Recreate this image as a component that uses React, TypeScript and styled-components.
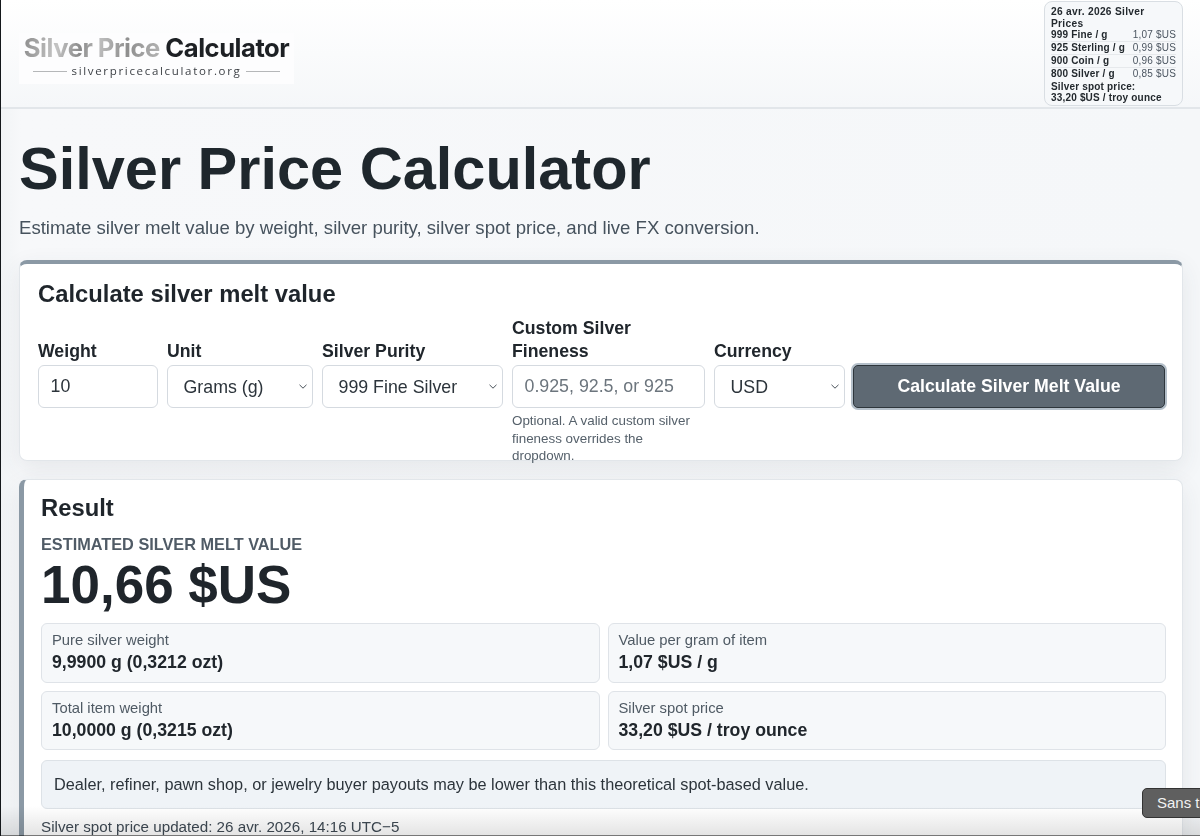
import React from "react";
import styled, { createGlobalStyle } from "styled-components";

const Global = createGlobalStyle`
  html, body { margin: 0; padding: 0; height: 836px; overflow: hidden; }
  body { font-family: "Liberation Sans", Arial, sans-serif; color: #1f252b; background: #f5f7f9; }
  * { box-sizing: border-box; }
`;

const Page = styled.div`
  position: relative;
  height: 836px;
  overflow: hidden;
  border-left: 1px solid #14181b;
  background: linear-gradient(90deg, #f1f4f6 0, #f7f8fa 20px, #f5f7f9 100%);
`;

const Header = styled.header`
  height: 109px;
  display: flex;
  justify-content: space-between;
  align-items: flex-start;
  padding: 1px 17px 0 18px;
  background: linear-gradient(180deg, #ffffff 0, #f5f7f9 100%);
  border-bottom: 2px solid #e2e6ea;
`;

const Logo = styled.div`
  margin-top: 32px;
  width: 275px;
  height: 51px;
  background: #fdfdfe;
  display: flex;
  flex-direction: column;
  align-items: center;
`;

const LogoTitle = styled.div`
  font-family: "Inter", "Open Sans", sans-serif;
  font-weight: 700;
  font-size: 25.6px;
  line-height: 30px;
  letter-spacing: -0.5px;
  color: #1d2024;
  white-space: nowrap;
`;

const LogoSilver = styled.span`
  background: linear-gradient(100deg, #8d8d8d 0, #c4c4c4 25%, #8a8a8a 42%, #bdbdbd 55%, #8e8e8e 75%, #b5b5b5 100%);
  -webkit-background-clip: text;
  background-clip: text;
  color: transparent;
`;

const LogoUrl = styled.div`
  display: flex;
  align-items: center;
  gap: 4px;
  font-family: "Open Sans", sans-serif;
  font-size: 11.5px;
  line-height: 14px;
  letter-spacing: 1.68px;
  color: #3b3f44;
  margin-top: 1px;
  &::before, &::after {
    content: "";
    width: 34px;
    height: 1px;
    background: #b5b7b9;
  }
`;

const PriceBox = styled.aside`
  width: 139px;
  height: 105px;
  border: 1px solid #d9dee3;
  border-radius: 8px;
  background: #f6f8fa;
  padding: 4px 6px 0 6px;
  font-size: 10px;
  line-height: 11.5px;
  font-weight: 700;
  color: #23292e;
  letter-spacing: 0.18px;
`;

const PriceTitle = styled.div`
  font-size: 10.2px;
  letter-spacing: 0.3px;
  width: 110px;
  margin-bottom: 0;
`;

const PriceRow = styled.div`
  display: flex;
  justify-content: space-between;
  height: 13px;
  line-height: 12.5px;
  border-bottom: 1px solid #e6e9ec;
  white-space: nowrap;
  &:nth-of-type(5) { border-bottom: none; }
`;

const PriceValue = styled.span`
  font-weight: 400;
  color: #4b5560;
`;

const PriceSpot = styled.div`
  margin-top: 0;
  line-height: 11px;
`;

const Main = styled.main`
  padding: 0 17px 0 18px;
`;

const H1 = styled.h1`
  margin: 27px 0 0;
  font-size: 59.5px;
  line-height: 66px;
  font-weight: 700;
  color: #1f272d;
  white-space: nowrap;
`;

const Sub = styled.p`
  margin: 14px 0 0;
  font-size: 18.6px;
  line-height: 24px;
  color: #46525d;
`;

const CalcCard = styled.section`
  margin-top: 20px;
  height: 201px;
  background: #fff;
  border: 1px solid #e2e6ea;
  border-top: 4px solid #8b99a5;
  border-radius: 8px;
  padding: 15px 18px 0 18px;
  box-shadow: 0 8px 24px rgba(60, 70, 80, 0.09);
`;

const CardTitle = styled.h2`
  margin: 0;
  font-size: 23.8px;
  line-height: 30px;
  font-weight: 700;
  color: #1f252b;
`;

const Fields = styled.div`
  margin-top: 17px;
  display: grid;
  grid-template-columns: 120px 146px 181px 193px 131px 312px;
  column-gap: 9px;
  align-items: end;
  grid-template-rows: 43px;
  height: 82px;
  align-content: end;
`;

const Field = styled.div`
  display: flex;
  flex-direction: column;
  position: relative;
`;

const Label = styled.label`
  font-size: 17.7px;
  line-height: 22.5px;
  font-weight: 700;
  color: #20262c;
  margin-bottom: 3px;
`;

const controlBase = `
  width: 100%;
  height: 43px;
  border: 1px solid #d5dae0;
  border-radius: 6px;
  background: #fff;
  font-family: "Liberation Sans", Arial, sans-serif;
  font-size: 17.8px;
  color: #2c343b;
`;

const Input = styled.input`
  ${controlBase}
  padding: 0 11.5px;
  &::placeholder { color: #6c757d; opacity: 1; }
`;

const SelectWrap = styled.div`
  position: relative;
  height: 43px;
`;

const Select = styled.select`
  ${controlBase}
  appearance: none;
  padding: 0 15.5px;
`;

const Chevron = styled.svg`
  position: absolute;
  right: 6px;
  top: 19px;
  width: 8px;
  height: 5px;
  pointer-events: none;
`;

const Help = styled.div`
  position: absolute;
  top: 100%;
  left: 0;
  margin-top: 4px;
  font-size: 13.4px;
  line-height: 17.6px;
  color: #56616b;
  width: 190px;
`;

const Button = styled.button`
  height: 43px;
  width: 312px;
  margin-left: -1px;
  border: 1px solid #2e363c;
  border-radius: 5px;
  background: #5e6973;
  color: #fff;
  font-family: "Liberation Sans", Arial, sans-serif;
  font-size: 17.7px;
  font-weight: 700;
  box-shadow: 0 0 0 2px #b4bfc9;
`;

const ResultCard = styled.section`
  margin-top: 18px;
  background: #fff;
  border: 1px solid #e2e6ea;
  border-left: 5px solid #8b99a5;
  border-radius: 8px;
  padding: 13px 16px 0 17px;
  height: 400px;
  box-shadow: 0 8px 24px rgba(60, 70, 80, 0.09);
`;

const ResultTitle = styled(CardTitle)`
  font-size: 23.8px;
`;

const Eyebrow = styled.div`
  margin-top: 11px;
  font-size: 16.3px;
  line-height: 20px;
  font-weight: 700;
  color: #505b66;
  text-transform: uppercase;
`;

const BigValue = styled.div`
  font-size: 53px;
  line-height: 62px;
  font-weight: 700;
  color: #1f252b;
  margin-top: 0;
`;

const Stats = styled.div`
  margin-top: 7px;
  display: grid;
  grid-template-columns: 1fr 1fr;
  gap: 8px;
`;

const Stat = styled.div`
  height: 59.5px;
  background: #f6f8fa;
  border: 1px solid #dfe3e8;
  border-radius: 6px;
  padding: 7px 10px 0;
`;

const StatLabel = styled.div`
  font-size: 14.8px;
  line-height: 18px;
  color: #4f5a64;
`;

const StatValue = styled.div`
  font-size: 17.7px;
  line-height: 26px;
  font-weight: 700;
  color: #20262c;
`;

const Note = styled.div`
  margin-top: 10px;
  height: 49px;
  background: #eff3f7;
  border: 1px solid #dde2e7;
  border-radius: 6px;
  padding: 0 12px;
  display: flex;
  align-items: center;
  font-size: 16.3px;
  color: #2c343b;
`;

const Updated = styled.div`
  margin-top: 9px;
  font-size: 15.2px;
  line-height: 18px;
  color: #3f4a54;
`;

const BottomFade = styled.div`
  position: absolute;
  left: 0;
  right: 0;
  bottom: 0;
  height: 30px;
  background: linear-gradient(180deg, #ffffff 0, #e4e4e4 100%);
  mix-blend-mode: multiply;
  border-bottom: 1px solid #777;
  pointer-events: none;
`;

const Tooltip = styled.div`
  position: absolute;
  left: 1141px;
  top: 788px;
  width: 90px;
  height: 30px;
  border: 1px solid #333;
  border-radius: 5px;
  background: #5f5f5f;
  color: #f2f2f2;
  font-size: 15px;
  line-height: 28px;
  padding-left: 14px;
  white-space: nowrap;
`;

const ChevronIcon = () => (
  <Chevron viewBox="0 0 8 5" fill="none">
    <path d="M0.5 0.8 L4 4.2 L7.5 0.8" stroke="#4a525a" strokeWidth="1" />
  </Chevron>
);

const prices = [
  ["999 Fine / g", "1,07 $US"],
  ["925 Sterling / g", "0,99 $US"],
  ["900 Coin / g", "0,96 $US"],
  ["800 Silver / g", "0,85 $US"],
];

const stats = [
  ["Pure silver weight", "9,9900 g (0,3212 ozt)"],
  ["Value per gram of item", "1,07 $US / g"],
  ["Total item weight", "10,0000 g (0,3215 ozt)"],
  ["Silver spot price", "33,20 $US / troy ounce"],
];

export default function App() {
  return (
    <Page>
      <Global />
      <Header>
        <Logo>
          <LogoTitle>
            <LogoSilver>Silver Price</LogoSilver> Calculator
          </LogoTitle>
          <LogoUrl>silverpricecalculator.org</LogoUrl>
        </Logo>
        <PriceBox>
          <PriceTitle>26 avr. 2026 Silver Prices</PriceTitle>
          {prices.map(([k, v]) => (
            <PriceRow key={k}>
              <span>{k}</span>
              <PriceValue>{v}</PriceValue>
            </PriceRow>
          ))}
          <PriceSpot>
            Silver spot price:
            <br />
            33,20 $US / troy ounce
          </PriceSpot>
        </PriceBox>
      </Header>
      <Main>
        <H1>Silver Price Calculator</H1>
        <Sub>Estimate silver melt value by weight, silver purity, silver spot price, and live FX conversion.</Sub>
        <CalcCard>
          <CardTitle>Calculate silver melt value</CardTitle>
          <Fields>
            <Field>
              <Label>Weight</Label>
              <Input defaultValue="10" />
            </Field>
            <Field>
              <Label>Unit</Label>
              <SelectWrap>
                <Select defaultValue="g">
                  <option value="g">Grams (g)</option>
                </Select>
                <ChevronIcon />
              </SelectWrap>
            </Field>
            <Field>
              <Label>Silver Purity</Label>
              <SelectWrap>
                <Select defaultValue="999">
                  <option value="999">999 Fine Silver</option>
                </Select>
                <ChevronIcon />
              </SelectWrap>
            </Field>
            <Field>
              <Label>Custom Silver Fineness</Label>
              <Input placeholder="0.925, 92.5, or 925" />
              <Help>Optional. A valid custom silver fineness overrides the dropdown.</Help>
            </Field>
            <Field>
              <Label>Currency</Label>
              <SelectWrap>
                <Select defaultValue="USD">
                  <option value="USD">USD</option>
                </Select>
                <ChevronIcon />
              </SelectWrap>
            </Field>
            <Button>Calculate Silver Melt Value</Button>
          </Fields>
        </CalcCard>
        <ResultCard>
          <ResultTitle>Result</ResultTitle>
          <Eyebrow>Estimated silver melt value</Eyebrow>
          <BigValue>10,66 $US</BigValue>
          <Stats>
            {stats.map(([k, v]) => (
              <Stat key={k}>
                <StatLabel>{k}</StatLabel>
                <StatValue>{v}</StatValue>
              </Stat>
            ))}
          </Stats>
          <Note>Dealer, refiner, pawn shop, or jewelry buyer payouts may be lower than this theoretical spot-based value.</Note>
          <Updated>Silver spot price updated: 26 avr. 2026, 14:16 UTC−5</Updated>
        </ResultCard>
      </Main>
      <BottomFade />
      <Tooltip>Sans titre</Tooltip>
    </Page>
  );
}
